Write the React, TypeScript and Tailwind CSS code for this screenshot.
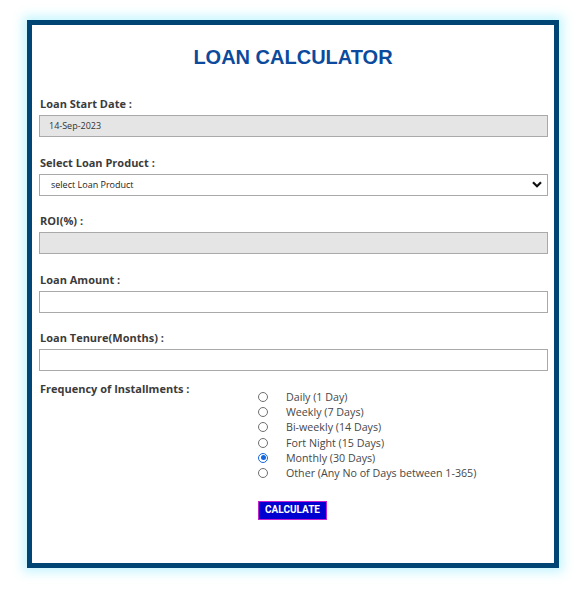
import React from 'react';

const options = [
  { label: 'Daily (1 Day)', checked: false },
  { label: 'Weekly (7 Days)', checked: false },
  { label: 'Bi-weekly (14 Days)', checked: false },
  { label: 'Fort Night (15 Days)', checked: false },
  { label: 'Monthly (30 Days)', checked: true },
  { label: 'Other (Any No of Days between 1-365)', checked: false },
];

const Label: React.FC<{ text: string; first?: boolean }> = ({ text, first }) => (
  <div className={`h-[15px] leading-[15px] mb-[4px] text-[11px] font-bold text-[#3b3b3b] pl-px ${first ? 'mt-[27px]' : 'mt-[17.5px]'}`}>
    {text}
  </div>
);

export default function App() {
  return (
    <div className="min-h-[589px] bg-white pt-[20px] pl-[27px] font-['Open_Sans',sans-serif]">
      <div className="w-[532px] h-[548px] border-[5px] border-[#014574] bg-white shadow-[0_0_10px_4px_rgba(90,225,255,0.35)] pl-[7px] pr-[6px]">
        <h1 className="mt-[21px] h-[23px] leading-[23px] text-center text-[20px] font-bold text-[#0b4a9c] font-['Liberation_Sans',Arial,sans-serif] pr-[1px]">
          LOAN CALCULATOR
        </h1>

        <Label text="Loan Start Date :" first />
        <div className="h-[22px] border border-[#a9a9a9] bg-[#e5e5e5] flex items-center pl-[9px] text-[9px] text-[#333]">
          14-Sep-2023
        </div>

        <Label text="Select Loan Product :" />
        <div className="h-[22px] border border-[#a9a9a9] bg-white flex items-center justify-between pl-[11px] pr-[5px] text-[9px] text-[#222]">
          <span>select Loan Product</span>
          <svg width="10" height="7" viewBox="0 0 10 7">
            <path d="M1 1.2 L5 5.2 L9 1.2" fill="none" stroke="#111" strokeWidth="2.2" />
          </svg>
        </div>

        <Label text="ROI(%) :" />
        <div className="h-[22px] border border-[#a9a9a9] bg-[#e5e5e5]" />

        <Label text="Loan Amount :" />
        <div className="h-[22px] border border-[#a9a9a9] bg-white" />

        <Label text="Loan Tenure(Months) :" />
        <div className="h-[22px] border border-[#a9a9a9] bg-white" />

        <div className="flex mt-[10px]">
          <div className="w-[219px] h-[15px] leading-[15px] text-[11px] font-bold text-[#3b3b3b] pl-px">
            Frequency of Installments :
          </div>
          <div className="pt-[8px]">
            {options.map((o) => (
              <div key={o.label} className="flex items-center h-[15.3px] text-[10.7px] text-[#474747]">
                {o.checked ? (
                  <span className="w-[10px] h-[10px] rounded-full border-[1.5px] border-[#1467e0] flex items-center justify-center">
                    <span className="w-[5px] h-[5px] rounded-full bg-[#1467e0]" />
                  </span>
                ) : (
                  <span className="w-[10px] h-[10px] rounded-full border border-[#6f6f6f] bg-white" />
                )}
                <span className="ml-[18px]">{o.label}</span>
              </div>
            ))}
            <button className="mt-[20px] w-[69px] h-[19px] bg-[#0000d0] border border-[#c41fd0] text-white text-[10px] font-bold font-['Roboto',sans-serif] leading-none">
              CALCULATE
            </button>
          </div>
        </div>
      </div>
    </div>
  );
}
